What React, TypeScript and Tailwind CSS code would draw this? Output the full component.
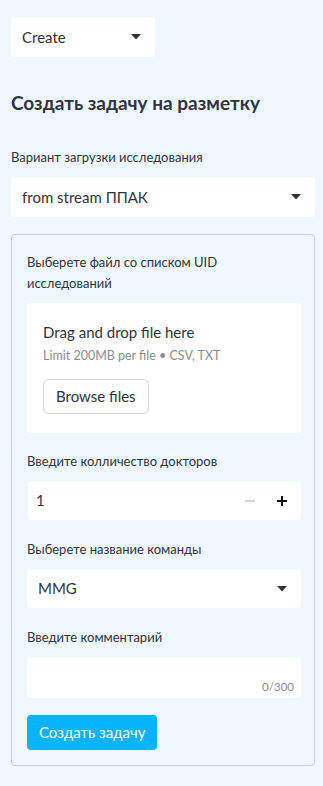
import React from 'react';

const Caret: React.FC = () => (
  <svg width="10" height="6" viewBox="0 0 10 6" className="shrink-0">
    <path d="M0 0 L10 0 L5 5.5 Z" fill="#31333f" />
  </svg>
);

const Label: React.FC<{ children: React.ReactNode; className?: string }> = ({ children, className }) => (
  <div className={`text-[13px] leading-[21px] text-[#31333f] ${className ?? ''}`}>{children}</div>
);

const Select: React.FC<{ value: string; className?: string }> = ({ value, className }) => (
  <div className={`h-10 bg-white rounded flex items-center justify-between pl-[11px] pr-[14px] ${className ?? ''}`}>
    <span className="text-[15px] text-[#31333f]">{value}</span>
    <Caret />
  </div>
);

const App: React.FC = () => {
  return (
    <div
      className="min-h-[786px] w-[323px] bg-[#f0f8ff] pt-[17px] pl-[11px] pr-[8px] text-[#31333f]"
      style={{ fontFamily: 'Lato, "Noto Sans", sans-serif' }}
    >
      <Select value="Create" className="w-[144px]" />

      <h3 className="mt-[34px] text-[19px] font-bold leading-[24px]">Создать задачу на разметку</h3>

      <Label className="mt-[32px]">Вариант загрузки исследования</Label>
      <Select value="from stream ППАК" className="mt-[9px]" />

      <div className="mt-[17px] border border-[#c9d1dc] rounded pl-[15px] pr-[13px] pt-[17px] pb-[15px]">
        <Label>Выберете файл со списком UID исследований</Label>

        <div className="mt-[9px] h-[130px] bg-white rounded px-4 pt-[17px]">
          <div className="text-[15px] leading-6">Drag and drop file here</div>
          <div className="text-[12.5px] leading-5 text-[#8a8d98] mt-[2px]">Limit 200MB per file • CSV, TXT</div>
          <button className="mt-[13px] h-[35px] px-3 border border-[#d0d3da] rounded-md bg-white text-[15px] text-[#31333f]">
            Browse files
          </button>
        </div>

        <Label className="mt-[18px]">Введите колличество докторов</Label>
        <div className="mt-[9px] ml-px h-[39px] bg-white rounded flex items-center pl-[8px] pr-[14px]">
          <span className="flex-1 text-[15px]">1</span>
          <span className="w-[10px] h-[2px] bg-[#d3d6de] mr-[22px]" />
          <svg width="10" height="10" viewBox="0 0 10 10">
            <path d="M5 0 V10 M0 5 H10" stroke="#111" strokeWidth="2" />
          </svg>
        </div>

        <Label className="mt-[19px]">Выберете название команды</Label>
        <Select value="MMG" className="mt-[9px] h-[39px]" />

        <Label className="mt-[19px]">Введите комментарий</Label>
        <div className="mt-[9px] h-[41px] bg-white rounded flex items-end justify-end px-[7px] pb-[3px]">
          <span className="text-[11.5px] text-[#8a8d98]">0/300</span>
        </div>

        <button className="mt-[17px] h-[35px] px-3 rounded bg-[#06b4fd] text-white text-[15px]">Создать задачу</button>
      </div>
    </div>
  );
};

export default App;
